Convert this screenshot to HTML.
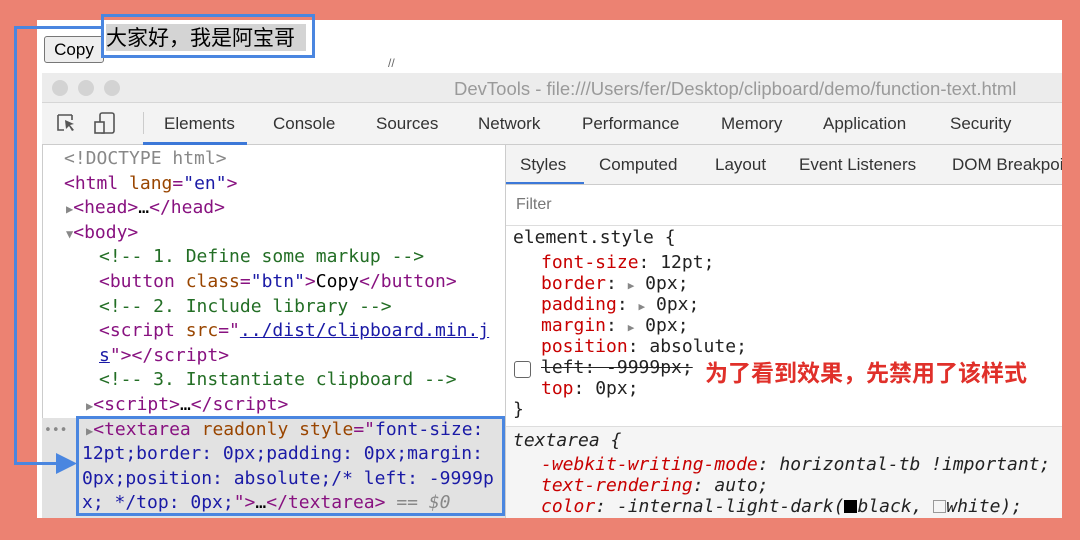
<!DOCTYPE html>
<html><head><meta charset="utf-8"><style>
*{margin:0;padding:0;box-sizing:border-box}
body{width:1080px;height:540px;background:#ec8272;position:relative;overflow:hidden;font-family:"Liberation Sans","Noto Sans CJK SC",sans-serif}
.abs{position:absolute}
.mono{font-family:"DejaVu Sans Mono","Liberation Mono",monospace;font-size:18px;white-space:pre}
.tag{color:#881280}.attr{color:#994500}.val{color:#1a1aa6}.cm{color:#236e25}.g{color:#888}
.prop{color:#c80000}
.l{position:absolute;left:0}
.tab{position:absolute;font-size:17px;color:#333;white-space:pre}
</style></head><body>
<div class="abs" style="left:37px;top:20px;width:1025px;height:498px;background:#fff"></div>
<div class="abs" style="left:44px;top:36px;width:60px;height:27px;border:1px solid #777;border-radius:3px;background:#eee;font-size:17px;line-height:25px;text-align:center">Copy</div>
<div class="abs" style="left:106px;top:24px;width:200px;height:27px;background:#d4d4d4;font-size:21px;line-height:27px;font-family:'Noto Sans CJK SC',sans-serif;white-space:nowrap">大家好，我是阿宝哥</div>
<div class="abs" style="left:101px;top:14px;width:214px;height:44px;border:3px solid #4a86e0"></div>
<div class="abs" style="left:388px;top:56px;font-size:12px;color:#666">//</div>
<!-- devtools -->
<div class="abs" style="left:42px;top:73px;width:1020px;height:445px;background:#fff;border-left:1px solid #ccc"></div>
<div class="abs" style="left:42px;top:73px;width:1020px;height:30px;background:#ececec;border-bottom:1px solid #d6d6d6"></div>
<div class="abs" style="left:52px;top:80px;width:16px;height:16px;border-radius:50%;background:#d3d3d3"></div>
<div class="abs" style="left:78px;top:80px;width:16px;height:16px;border-radius:50%;background:#d3d3d3"></div>
<div class="abs" style="left:104px;top:80px;width:16px;height:16px;border-radius:50%;background:#d3d3d3"></div>
<div class="abs" style="left:454px;top:78px;font-size:18.5px;color:#9a9a9a;white-space:nowrap">DevTools - file:///Users/fer/Desktop/clipboard/demo/function-text.html</div>
<div class="abs" style="left:42px;top:103px;width:1020px;height:42px;background:#f3f3f3;border-bottom:1px solid #ccc"></div>
<svg class="abs" style="left:55px;top:110px" width="70" height="28"><path d="M3 5h14M3 5v15h6M17 5v5" stroke="#555" stroke-width="1.6" fill="none"/><path d="M10 10l9 4-4 1 4 5-2 1-3-5-3 3z" fill="#555"/><rect x="45" y="3" width="14" height="20" rx="2" stroke="#555" stroke-width="1.6" fill="none"/><rect x="40" y="12" width="9" height="11" stroke="#555" stroke-width="1.6" fill="#f3f3f3"/></svg>
<div class="abs" style="left:143px;top:112px;width:1px;height:22px;background:#ccc"></div>
<span class="tab" style="left:164px;top:114px">Elements</span><span class="tab" style="left:273px;top:114px">Console</span><span class="tab" style="left:376px;top:114px">Sources</span><span class="tab" style="left:478px;top:114px">Network</span><span class="tab" style="left:582px;top:114px">Performance</span><span class="tab" style="left:721px;top:114px">Memory</span><span class="tab" style="left:823px;top:114px">Application</span><span class="tab" style="left:950px;top:114px">Security</span>
<div class="abs" style="left:143px;top:142px;width:104px;height:3px;background:#3c78d8"></div>
<!-- left panel -->
<div class="abs" style="left:505px;top:145px;width:1px;height:373px;background:#ccc"></div>
<div class="abs" style="left:42px;top:418px;width:463px;height:100px;background:#e2e2e2"></div>
<div class="abs mono" style="left:0;top:147px;width:505px;height:370px;line-height:24.6px">
<div class="l" style="left:64px;top:0" ><span class="g">&lt;!DOCTYPE html&gt;</span></div>
<div class="l" style="left:64px;top:24.6px"><span class="tag">&lt;html </span><span class="attr">lang</span><span class="tag">=</span><span class="val">"en"</span><span class="tag">&gt;</span></div>
<div class="l" style="left:66px;top:49.2px"><span class="g" style="font-size:12px">▶</span><span class="tag">&lt;head&gt;</span>…<span class="tag">&lt;/head&gt;</span></div>
<div class="l" style="left:66px;top:73.8px"><span class="g" style="font-size:12px">▼</span><span class="tag">&lt;body&gt;</span></div>
<div class="l" style="left:99px;top:98.4px"><span class="cm">&lt;!-- 1. Define some markup --&gt;</span></div>
<div class="l" style="left:99px;top:123px"><span class="tag">&lt;button </span><span class="attr">class</span><span class="tag">=</span><span class="val">"btn"</span><span class="tag">&gt;</span>Copy<span class="tag">&lt;/button&gt;</span></div>
<div class="l" style="left:99px;top:147.6px"><span class="cm">&lt;!-- 2. Include library --&gt;</span></div>
<div class="l" style="left:99px;top:172.2px"><span class="tag">&lt;script </span><span class="attr">src</span><span class="tag">="</span><span class="val" style="text-decoration:underline">../dist/clipboard.min.j</span></div>
<div class="l" style="left:99px;top:196.8px"><span class="val" style="text-decoration:underline">s</span><span class="tag">"&gt;&lt;/script&gt;</span></div>
<div class="l" style="left:99px;top:221.4px"><span class="cm">&lt;!-- 3. Instantiate clipboard --&gt;</span></div>
<div class="l" style="left:86px;top:246px"><span class="g" style="font-size:12px">▶</span><span class="tag">&lt;script&gt;</span>…<span class="tag">&lt;/script&gt;</span></div>
<div class="l" style="left:44px;top:272px;font-size:13px" ><span class="g">•••</span></div>
<div class="l" style="left:86px;top:270.6px"><span class="g" style="font-size:12px">▶</span><span class="tag">&lt;textarea </span><span class="attr">readonly style</span><span class="tag">="</span><span class="val">font-size:</span></div>
<div class="l" style="left:82px;top:295.2px"><span class="val">12pt;border: 0px;padding: 0px;margin:</span></div>
<div class="l" style="left:82px;top:319.8px"><span class="val">0px;position: absolute;/* left: -9999p</span></div>
<div class="l" style="left:82px;top:344.4px"><span class="val">x; */top: 0px;</span><span class="tag">"&gt;</span>…<span class="tag">&lt;/textarea&gt;</span> <span class="g">== <i>$0</i></span></div>
</div>
<div class="abs" style="left:76px;top:416px;width:429px;height:100px;border:3px solid #4a86e0"></div>
<!-- arrow -->
<div class="abs" style="left:14px;top:26px;width:90px;height:3px;background:#4a86e0"></div>
<div class="abs" style="left:14px;top:26px;width:3px;height:439px;background:#4a86e0"></div>
<div class="abs" style="left:14px;top:462px;width:50px;height:3px;background:#4a86e0"></div>
<svg class="abs" style="left:56px;top:453px" width="22" height="22"><path d="M0 0L21 10.5L0 21z" fill="#4a86e0"/></svg>
<!-- right panel -->
<div class="abs" style="left:506px;top:145px;width:556px;height:40px;background:#f3f3f3;border-bottom:1px solid #ccc"></div>
<span class="tab" style="left:520px;top:155px">Styles</span><span class="tab" style="left:599px;top:155px">Computed</span><span class="tab" style="left:715px;top:155px">Layout</span><span class="tab" style="left:799px;top:155px">Event Listeners</span><span class="tab" style="left:952px;top:155px;width:110px;overflow:hidden">DOM Breakpoints</span>
<div class="abs" style="left:506px;top:182px;width:78px;height:2px;background:#3c78d8"></div>
<div class="abs" style="left:510px;top:190px;width:552px;height:32px;background:#fff"></div>
<div class="abs" style="left:516px;top:196px;font-size:16px;color:#777">Filter</div>
<div class="abs" style="left:506px;top:225px;width:556px;height:1px;background:#ddd"></div>
<div class="abs" style="left:506px;top:426px;width:556px;height:92px;background:#f5f5f5;border-top:1px solid #ddd"></div>
<div class="abs mono" style="left:0;top:227px;line-height:21px;color:#222">
<div class="l" style="left:513px;top:0">element.style {</div>
<div class="l" style="left:541px;top:25px"><span class="prop">font-size</span>: 12pt;</div>
<div class="l" style="left:541px;top:46px"><span class="prop">border</span>: <span class="g" style="font-size:11px">▶</span> 0px;</div>
<div class="l" style="left:541px;top:67px"><span class="prop">padding</span>: <span class="g" style="font-size:11px">▶</span> 0px;</div>
<div class="l" style="left:541px;top:88px"><span class="prop">margin</span>: <span class="g" style="font-size:11px">▶</span> 0px;</div>
<div class="l" style="left:541px;top:109px"><span class="prop">position</span>: absolute;</div>
<div class="l" style="left:541px;top:130px;text-decoration:line-through">left: -9999px;</div>
<div class="l" style="left:541px;top:151px"><span class="prop">top</span>: 0px;</div>
<div class="l" style="left:513px;top:172px">}</div>
<div class="l" style="left:513px;top:203px;font-style:italic">textarea {</div>
<div class="l" style="left:541px;top:227px;font-style:italic"><span class="prop">-webkit-writing-mode</span>: horizontal-tb !important;</div>
<div class="l" style="left:541px;top:248px;font-style:italic"><span class="prop">text-rendering</span>: auto;</div>
<div class="l" style="left:541px;top:269px;font-style:italic"><span class="prop">color</span>: -internal-light-dark(<span style="display:inline-block;width:13px;height:13px;background:#000;vertical-align:-1px"></span>black, <span style="display:inline-block;width:13px;height:13px;border:1px solid #999;vertical-align:-1px"></span>white);</div>
</div>
<div class="abs" style="left:514px;top:361px;width:17px;height:17px;border:1.5px solid #666;border-radius:3px;background:#fff"></div>
<div class="abs" style="left:705px;top:354px;font-size:23px;font-weight:bold;color:#e0302a;font-family:'Noto Sans CJK SC',sans-serif;white-space:nowrap">为了看到效果，先禁用了该样式</div>
</body></html>
